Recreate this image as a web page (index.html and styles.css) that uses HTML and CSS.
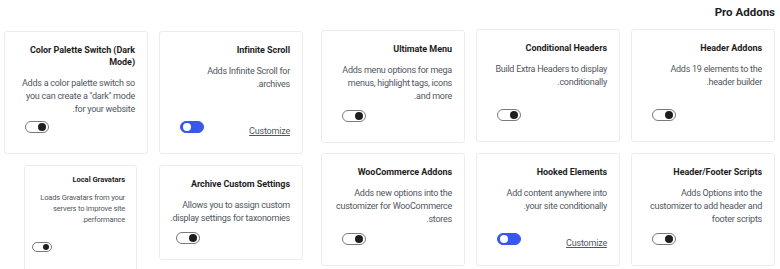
FILE: index.html
```html
<!DOCTYPE html>
<html lang="en" dir="rtl">
<head>
<meta charset="utf-8">
<title>Pro Addons</title>
<link rel="stylesheet" href="styles.css">
</head>
<body>
<div class="page">
  <h2 class="heading">Pro Addons</h2>
  <div class="board">
    <div class="grid grid-main">
      <div class="card">
        <h3 class="card-title">Header Addons</h3>
        <p class="card-desc">Adds 19 elements to the header builder.</p>
        <div class="card-foot"><span class="toggle" role="switch" aria-checked="false"></span></div>
      </div>
      <div class="card">
        <h3 class="card-title">Conditional Headers</h3>
        <p class="card-desc">Build Extra Headers to display conditionally.</p>
        <div class="card-foot"><span class="toggle" role="switch" aria-checked="false"></span></div>
      </div>
      <div class="card card-shift">
        <h3 class="card-title">Ultimate Menu</h3>
        <p class="card-desc">Adds menu options for mega menus, highlight tags, icons and more.</p>
        <div class="card-foot"><span class="toggle" role="switch" aria-checked="false"></span></div>
      </div>
      <div class="card">
        <h3 class="card-title">Header/Footer Scripts</h3>
        <p class="card-desc">Adds Options into the customizer to add header and footer scripts</p>
        <div class="card-foot"><span class="toggle" role="switch" aria-checked="false"></span></div>
      </div>
      <div class="card">
        <h3 class="card-title">Hooked Elements</h3>
        <p class="card-desc">Add content anywhere into your site conditionally.</p>
        <div class="card-foot"><a class="customize" href="#">Customize</a><span class="toggle is-on" role="switch" aria-checked="true"></span></div>
      </div>
      <div class="card">
        <h3 class="card-title">WooCommerce Addons</h3>
        <p class="card-desc">Adds new options into the customizer for WooCommerce stores.</p>
        <div class="card-foot"><span class="toggle" role="switch" aria-checked="false"></span></div>
      </div>
    </div>
    <div class="grid grid-side">
      <div class="card card-tall">
        <h3 class="card-title">Infinite Scroll</h3>
        <p class="card-desc">Adds Infinite Scroll for archives.</p>
        <div class="card-foot"><a class="customize" href="#">Customize</a><span class="toggle is-on" role="switch" aria-checked="true"></span></div>
      </div>
      <div class="card card-tall">
        <h3 class="card-title">Color Palette Switch (Dark Mode)</h3>
        <p class="card-desc">Adds a color palette switch so you can create a "dark" mode for your website.</p>
        <div class="card-foot"><span class="toggle" role="switch" aria-checked="false"></span></div>
      </div>
      <div class="card card-archive">
        <h3 class="card-title">Archive Custom Settings</h3>
        <p class="card-desc">Allows you to assign custom display settings for taxonomies.</p>
        <div class="card-foot"><span class="toggle" role="switch" aria-checked="false"></span></div>
      </div>
      <div class="card card-compact">
        <h3 class="card-title">Local Gravatars</h3>
        <p class="card-desc">Loads Gravatars from your servers to improve site performance.</p>
        <div class="card-foot"><span class="toggle" role="switch" aria-checked="false"></span></div>
      </div>
    </div>
  </div>
</div>
</body>
</html>
```

FILE: styles.css
```css
html, body {
  margin: 0;
  padding: 0;
  background: #fff;
  overflow: hidden;
}

body {
  font-family: Roboto, "Liberation Sans", Arial, sans-serif;
  color: #1e1e1e;
}

.page {
  height: 269px;
  overflow: hidden;
  padding: 0 5px 0 4px;
}

.heading {
  margin: 0;
  padding: 5px 0 10px;
  font-size: 11.5px;
  line-height: 14px;
  font-weight: 700;
  color: #1e1e1e;
}

.board {
  display: flex;
  align-items: flex-start;
  gap: 18px;
}

.grid {
  display: grid;
  grid-template-columns: repeat(3, 144px);
  column-gap: 11px;
  row-gap: 11px;
}

.grid-main {
  grid-auto-rows: 113px;
}

.grid-side {
  grid-template-columns: repeat(2, 144px);
  margin-top: 2px;
  align-items: start;
}

.card {
  box-sizing: border-box;
  display: flex;
  flex-direction: column;
  padding: 12px 12px 20px 14px;
  border: 1px solid #ececec;
  border-radius: 3px;
  background: #fff;
}

.card-shift {
  margin-top: 1px;
  margin-bottom: -1px;
}

.card-tall {
  height: 123px;
}

.card-archive {
  height: 95px;
  padding-left: 10px;
  padding-bottom: 15px;
}

.card-compact {
  height: 125px;
  margin: 0 11px 0 20px;
  padding: 9px 11px 0 6px;
}

.card-title {
  margin: 0;
  font-size: 9px;
  line-height: 12px;
  font-weight: 700;
  letter-spacing: -0.05px;
  color: #1e1e1e;
}

.card-desc {
  margin: 9px 0 0;
  font-size: 9px;
  line-height: 13px;
  letter-spacing: -0.25px;
  color: #50575e;
}

.card-foot {
  margin-top: auto;
  display: flex;
  align-items: flex-start;
}

.card-compact .card-title {
  font-size: 7.6px;
  line-height: 10px;
}

.card-compact .card-desc {
  margin-top: 7px;
  font-size: 7.6px;
  line-height: 11px;
  letter-spacing: -0.2px;
}

.card-compact .card-foot {
  margin-top: 17px;
}

.customize {
  margin-top: 4px;
  margin-bottom: -4px;
  font-size: 9px;
  line-height: 12px;
  letter-spacing: -0.2px;
  color: #50575e;
  text-decoration: underline;
}

.toggle {
  position: relative;
  box-sizing: border-box;
  display: block;
  width: 24px;
  height: 12px;
  margin-right: auto;
  margin-left: 6px;
  border: 1px solid #7a7a7a;
  border-radius: 6px;
  background: #fff;
}

.toggle::after {
  content: "";
  position: absolute;
  top: 1px;
  right: 2px;
  width: 8px;
  height: 8px;
  border-radius: 50%;
  background: #1e1e1e;
}

.toggle.is-on {
  background: #3858e9;
  border-color: #3858e9;
}

.toggle.is-on::after {
  right: auto;
  left: 2px;
  background: #fff;
}

.card-compact .toggle {
  width: 20px;
  height: 10px;
  margin-left: 1px;
  border-radius: 5px;
}

.card-compact .toggle::after {
  width: 6px;
  height: 6px;
  top: 1px;
  right: 2px;
}
```
